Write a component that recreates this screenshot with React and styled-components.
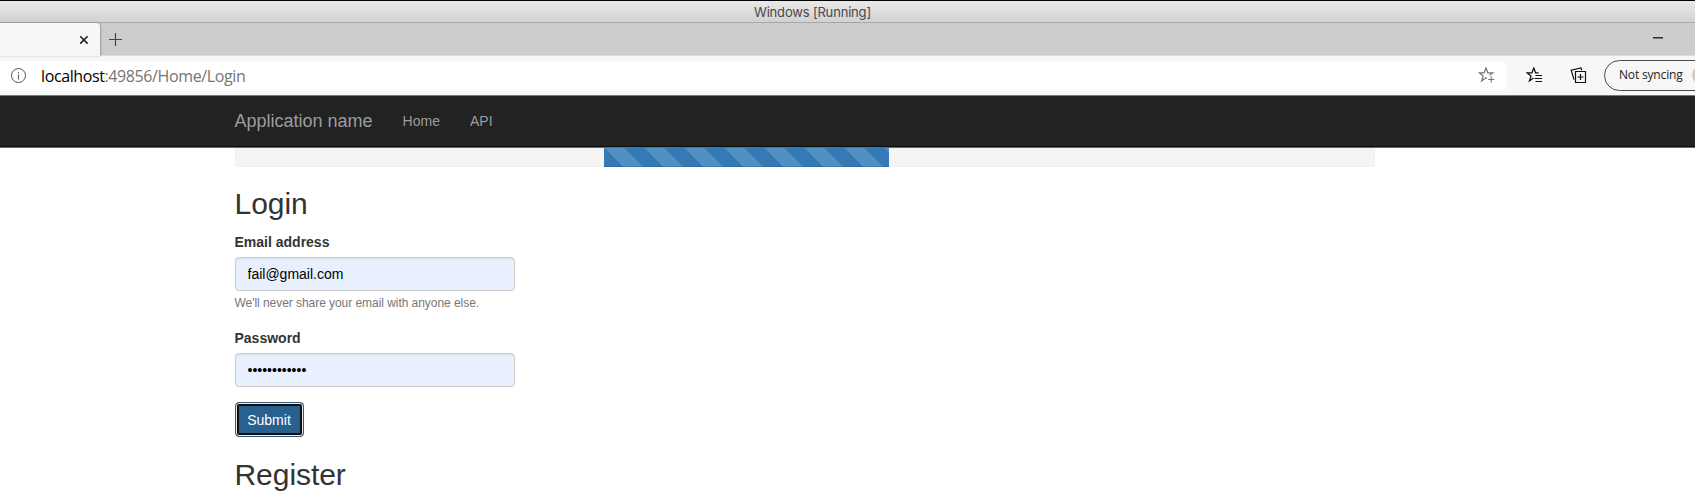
import React from "react";
import styled, { createGlobalStyle } from "styled-components";

const GlobalStyle = createGlobalStyle`
  * { box-sizing: border-box; }
  body {
    margin: 0;
    background: #fff;
    overflow: hidden;
    color: #333;
    font: 14px/20px "Liberation Sans", Arial, sans-serif;
  }
`;

const Window = styled.div`
  height: 492px;
  overflow: hidden;
`;

const TitleBar = styled.header`
  height: 23px;
  padding-left: 754px;
  border-top: 1px solid #000;
  border-bottom: 1px solid #a8a8a8;
  background: linear-gradient(#e9e9e9, #d1d1d1);
  color: #484848;
  font: 13px/23px Inter, sans-serif;
  letter-spacing: -0.18px;
  white-space: nowrap;
`;

const TabStrip = styled.div`
  display: flex;
  height: 33px;
  background: #cdcdcd;
  border-bottom: 1px solid #dedede;
`;

const Tab = styled.div`
  display: flex;
  justify-content: flex-end;
  width: 100px;
  height: 33px;
  padding: 12px 11px 0 0;
  background: #f7f7f7;
  border-radius: 0 4px 0 0;
  box-shadow: 1px 0 2px rgba(0, 0, 0, 0.25);
`;

const NewTab = styled.div`
  flex: 1;
  padding: 9px 0 0 9px;
`;

const Minimize = styled.div`
  width: 10px;
  height: 2px;
  margin: 14px 32px 0 0;
  background: linear-gradient(#2d2d2d 50%, #777 50%);
`;

const Toolbar = styled.div`
  display: flex;
  align-items: center;
  height: 39px;
  padding-bottom: 1px;
  background: #f7f7f7;
`;

const AddressBar = styled.div`
  display: flex;
  align-items: center;
  flex: none;
  width: 1506px;
  height: 30px;
  margin-top: 1px;
  padding: 0 11px;
  border-radius: 0 4px 4px 0;
  background: #fff;
`;

const Url = styled.div`
  flex: 1;
  margin-left: 14px;
  color: #757575;
  font: 16px/28px "Open Sans", sans-serif;
  letter-spacing: -0.39px;
  span { color: #000; }
`;

const ToolbarActions = styled.div`
  display: flex;
  align-items: center;
  flex: none;
  gap: 27px;
  width: 98px;
  padding: 1px 0 0 20px;
`;

const SyncButton = styled.div`
  display: flex;
  align-items: center;
  justify-content: space-between;
  flex: none;
  width: 118px;
  height: 31px;
  padding: 0 0 1px 14px;
  border: 1px solid #4a4a4a;
  border-radius: 16px;
  color: #222;
  font: 12px/16px "Open Sans", sans-serif;
  letter-spacing: -0.17px;
`;

const Avatar = styled.div`
  width: 29px;
  height: 22px;
  border-radius: 11px;
  background: #d0cdca;
`;

const Navbar = styled.nav`
  display: flex;
  align-items: center;
  gap: 30px;
  height: 53px;
  padding: 0 0 1px 234.5px;
  background: #222;
  border-top: 1px solid #777;
  border-bottom: 1px solid #6a6a6a;
  box-shadow: inset 0 -1px 0 #101010;
  color: #9d9d9d;
`;

const Brand = styled.div`
  font-size: 18px;
`;

const Container = styled.main`
  width: 1140px;
  margin-left: 234.5px;
`;

const Progress = styled.div`
  height: 19px;
  padding-left: 369.5px;
  border-radius: 0 0 4px 4px;
  background: #f4f4f4;
  box-shadow: inset 0 0 1px rgba(0, 0, 0, 0.15);
`;

const ProgressBar = styled.div`
  width: 285px;
  height: 19px;
  background: #337ab7 linear-gradient(45deg, rgba(255, 255, 255, 0.15) 25%, transparent 25%, transparent 50%, rgba(255, 255, 255, 0.15) 50%, rgba(255, 255, 255, 0.15) 75%, transparent 75%) 0 -1px / 40px 40px;
  box-shadow: inset 0 -1px 0 rgba(0, 0, 0, 0.12);
`;

const Heading = styled.h2`
  margin: ${(p) => p.$top} 0 12px;
  font-size: 30px;
  line-height: 33px;
  font-weight: 400;
  letter-spacing: -0.05px;
`;

const Field = styled.div`
  margin-bottom: 15px;
`;

const Label = styled.label`
  display: block;
  margin-bottom: 5px;
  font-weight: 700;
`;

const Input = styled.input`
  display: block;
  width: 280px;
  height: 34px;
  padding: 6px 12px;
  border: 1px solid #ccc;
  border-radius: 4px;
  outline: none;
  background: #e8f0fe;
  box-shadow: inset 0 1px 1px rgba(0, 0, 0, 0.075);
  color: #000;
  font: inherit;
`;

const Help = styled.small`
  display: block;
  height: 20px;
  margin-top: 2px;
  color: #777;
  font-size: 12px;
  letter-spacing: -0.05px;
`;

const Submit = styled.button`
  display: block;
  width: 69px;
  height: 35px;
  padding: 0;
  border: 1px solid #3d5870;
  border-radius: 4px;
  background: #286090;
  box-shadow: inset 0 0 0 1px #e8eef3, inset 0 0 0 3px #101010;
  color: #fff;
  font: inherit;
`;

const CloseIcon = () => (
  <svg width="10" height="10" viewBox="0 0 10 10" stroke="#222" strokeWidth="1.6">
    <path d="M1.2 1.2 8.6 8.6M8.6 1.2 1.2 8.6" />
  </svg>
);

const PlusIcon = () => (
  <svg width="14" height="14" viewBox="0 0 14 14" stroke="#444" strokeWidth="1.2">
    <path d="M6.5 0v13M0 6.5h13" />
  </svg>
);

const InfoIcon = () => (
  <svg width="16" height="16" viewBox="0 0 16 16" fill="none" stroke="#555" strokeWidth="1">
    <circle cx="7.5" cy="7.5" r="7" />
    <path d="M7.5 6.5v5M7.5 4v1.2" />
  </svg>
);

const FavoriteIcon = () => (
  <svg width="17" height="17" viewBox="0 0 17 17" fill="none" stroke="#777" strokeWidth="1.2">
    <path d="M9 11.3 8 10.7 3.6 14 5.2 9 1.2 5.8h4.9L8 1l1.9 4.8h4.9L11.6 8.4M13.2 9.5v6M10.2 12.5h6" />
  </svg>
);

const FavoritesIcon = () => (
  <svg width="17" height="17" viewBox="0 0 17 17" fill="none" stroke="#111" strokeWidth="1.2">
    <path d="M7.5 11.1 3.4 14 5 9 1 5.8h4.9L7.8 1l1.8 4.8h3M9.5 8.5H16M8.5 11.5H16M9.5 14.5H16" />
  </svg>
);

const CollectionsIcon = () => (
  <svg width="17" height="17" viewBox="0 0 17 17" fill="none" stroke="#111" strokeWidth="1.2">
    <path d="M5.5 4.5h10v11h-10zM7.5 10h6M10.5 7v6M4 12.7 1.2 3.1 11 1l.7 2.2" />
  </svg>
);

export default function App() {
  return (
    <Window>
      <GlobalStyle />
      <TitleBar>Windows [Running]</TitleBar>
      <TabStrip>
        <Tab><CloseIcon /></Tab>
        <NewTab><PlusIcon /></NewTab>
        <Minimize />
      </TabStrip>
      <Toolbar>
        <AddressBar>
          <InfoIcon />
          <Url><span>localhost</span>:49856/Home/Login</Url>
          <FavoriteIcon />
        </AddressBar>
        <ToolbarActions>
          <FavoritesIcon />
          <CollectionsIcon />
        </ToolbarActions>
        <SyncButton>Not syncing<Avatar /></SyncButton>
      </Toolbar>
      <Navbar>
        <Brand>Application name</Brand>
        <div>Home</div>
        <div>API</div>
      </Navbar>
      <Container>
        <Progress><ProgressBar /></Progress>
        <Heading $top="20px">Login</Heading>
        <Field>
          <Label>Email address</Label>
          <Input type="text" defaultValue="fail@gmail.com" />
          <Help>We'll never share your email with anyone else.</Help>
        </Field>
        <Field>
          <Label>Password</Label>
          <Input type="password" defaultValue="abcdefghijkl" />
        </Field>
        <Submit>Submit</Submit>
        <Heading $top="21px">Register</Heading>
      </Container>
    </Window>
  );
}
